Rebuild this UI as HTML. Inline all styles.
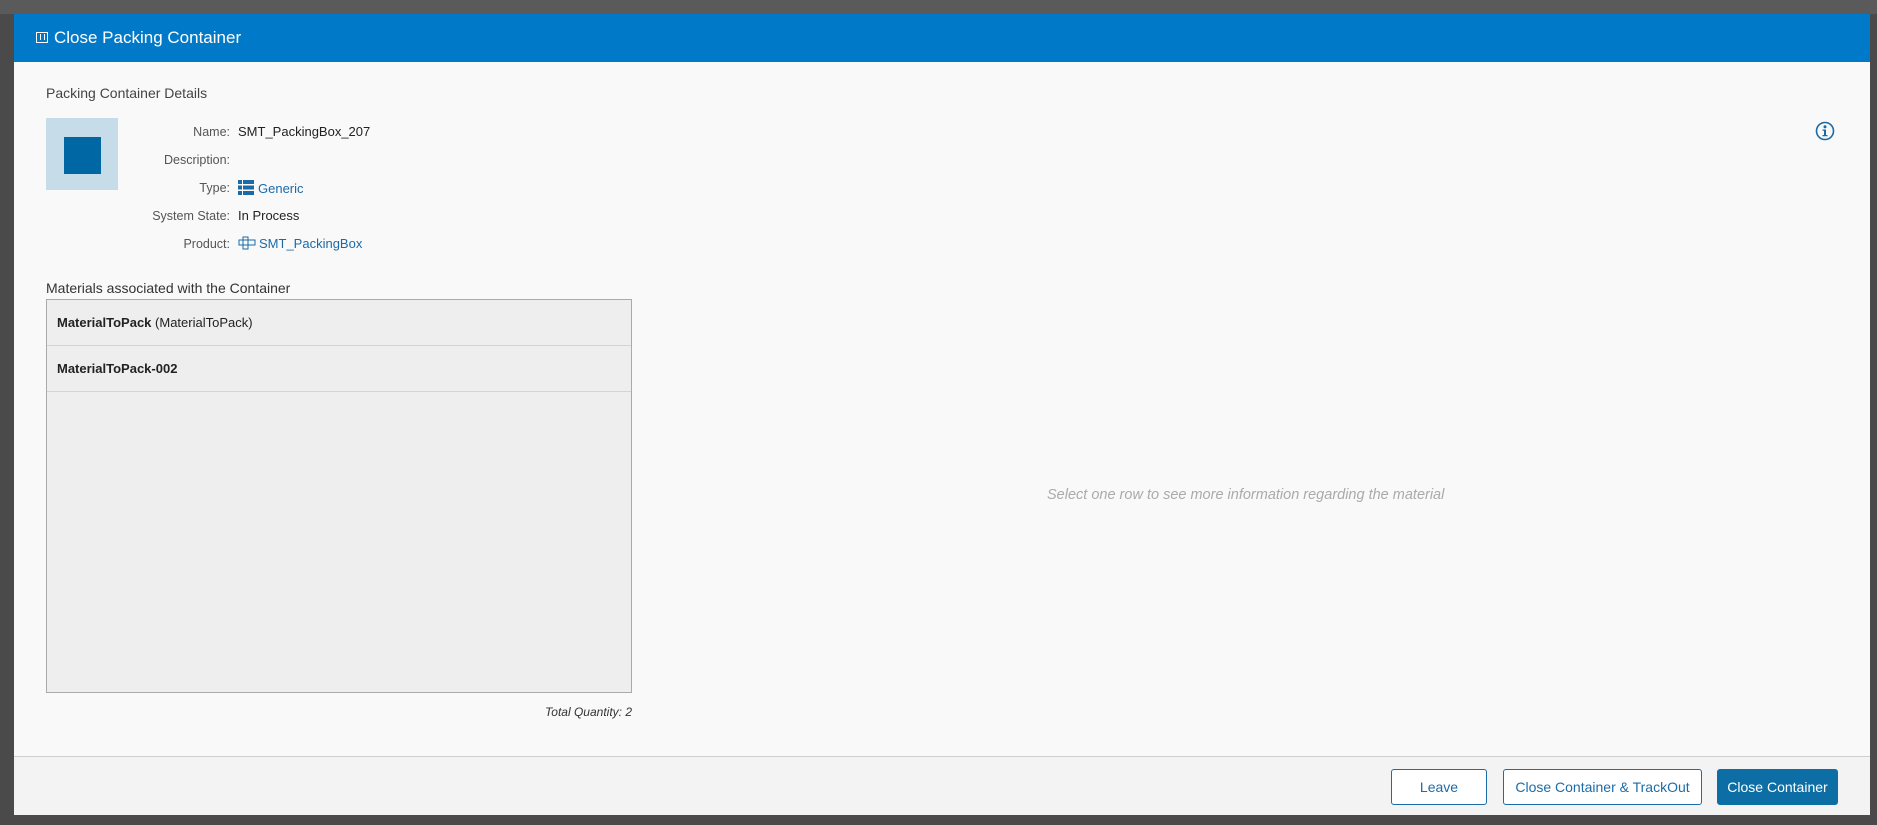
<!DOCTYPE html>
<html><head><meta charset="utf-8"><style>
*{margin:0;padding:0;box-sizing:border-box}
body{width:1877px;height:825px;background:#4a4a4a;font-family:"Liberation Sans",sans-serif;position:relative;overflow:hidden}
.bgtop{position:absolute;left:0;top:0;width:1877px;height:14px;background:#5a5a5a}
.modal{position:absolute;left:14px;top:14px;width:1856px;height:801px;background:#f9f9f9}
.hdr{position:absolute;left:0;top:0;width:100%;height:48px;background:#0079c8;color:#fff;font-size:17px;line-height:48px;padding-left:40px}
.hicon{position:absolute;left:22px;top:18px;width:12px;height:11px;border:1.5px solid #fff}
.hicon:after{content:"";position:absolute;left:3px;top:1px;width:3px;height:6px;border-left:1.5px solid #fff;border-right:1.5px solid #fff}
.t{position:absolute;white-space:nowrap}
.lbl{position:absolute;right:1640px;font-size:12.5px;color:#555;text-align:right}
.val{position:absolute;left:224px;font-size:13px;color:#222}
.link{color:#1a6aa8}
.grid{position:absolute;left:32px;top:285px;width:586px;height:394px;border:1px solid #aaa;background:#eee}
.row{height:46px;border-bottom:1px solid #d4d4d4;font-size:13px;line-height:45px;padding-left:10px;color:#222}
.footer{position:absolute;left:0;top:742px;width:100%;height:59px;background:#f3f3f3;border-top:1px solid #cfcfcf}
.btn{position:absolute;top:12px;height:36px;border:1px solid #1b6ca8;border-radius:3px;font-size:14px;line-height:34px;text-align:center;color:#1b6ca8;background:#fff}
</style></head><body>
<div class="bgtop"></div>
<div class="modal">
<div class="hdr"><div class="hicon"></div>Close Packing Container</div>
<div class="t" style="left:32px;top:71px;font-size:14px;color:#444">Packing Container Details</div>
<div style="position:absolute;left:32px;top:104px;width:72px;height:72px;background:#c6dce8"></div>
<div style="position:absolute;left:50px;top:123px;width:37px;height:37px;background:#0067a5"></div>
<div class="lbl t" style="top:111px">Name:</div><div class="val t" style="top:110px">SMT_PackingBox_207</div>
<div class="lbl t" style="top:139px">Description:</div>
<div class="lbl t" style="top:167px">Type:</div>
<div class="val t link" style="top:166px"><svg width="16" height="15" style="vertical-align:-2px;margin-right:4px"><rect x="0" y="0" width="4" height="4" fill="#1a6aa8"/><rect x="5" y="0" width="11" height="4" fill="#1a6aa8"/><rect x="0" y="5.5" width="4" height="4" fill="#1a6aa8"/><rect x="5" y="5.5" width="11" height="4" fill="#1a6aa8"/><rect x="0" y="11" width="4" height="4" fill="#1a6aa8"/><rect x="5" y="11" width="11" height="4" fill="#1a6aa8"/></svg>Generic</div>
<div class="lbl t" style="top:195px">System State:</div><div class="val t" style="top:194px">In Process</div>
<div class="lbl t" style="top:223px">Product:</div>
<div class="val t link" style="top:222px"><svg width="18" height="14" style="vertical-align:-2px;margin-right:3px" fill="none" stroke="#1a6aa8" stroke-width="1"><rect x="1" y="4" width="16" height="5"/><rect x="5" y="1" width="5" height="12"/></svg>SMT_PackingBox</div>
<svg style="position:absolute;left:1801px;top:107px" width="20" height="20"><circle cx="10" cy="10" r="8.5" fill="none" stroke="#1a6aa8" stroke-width="1.6"/><circle cx="10" cy="5.8" r="1.5" fill="#1a6aa8"/><path d="M7.5 8.5h3.5v5.5h1.5v1.3h-5v-1.3h1.5v-4.2h-1.5z" fill="#1a6aa8"/></svg>
<div class="t" style="left:32px;top:266px;font-size:14px;color:#333">Materials associated with the Container</div>
<div class="grid">
<div class="row"><b>MaterialToPack</b> (MaterialToPack)</div>
<div class="row"><b>MaterialToPack-002</b></div>
</div>
<div class="t" style="right:1238px;top:691px;font-size:12px;font-style:italic;color:#333">Total Quantity: 2</div>
<div class="t" style="left:1033px;top:473px;font-size:14.5px;font-style:italic;color:#aaa">Select one row to see more information regarding the material</div>
<div class="footer">
<div class="btn" style="left:1377px;width:96px">Leave</div>
<div class="btn" style="left:1489px;width:199px">Close Container &amp; TrackOut</div>
<div class="btn" style="left:1703px;width:121px;background:#0d6ea5;color:#fff;border-color:#0d6ea5">Close Container</div>
</div>
</div>
</body></html>
